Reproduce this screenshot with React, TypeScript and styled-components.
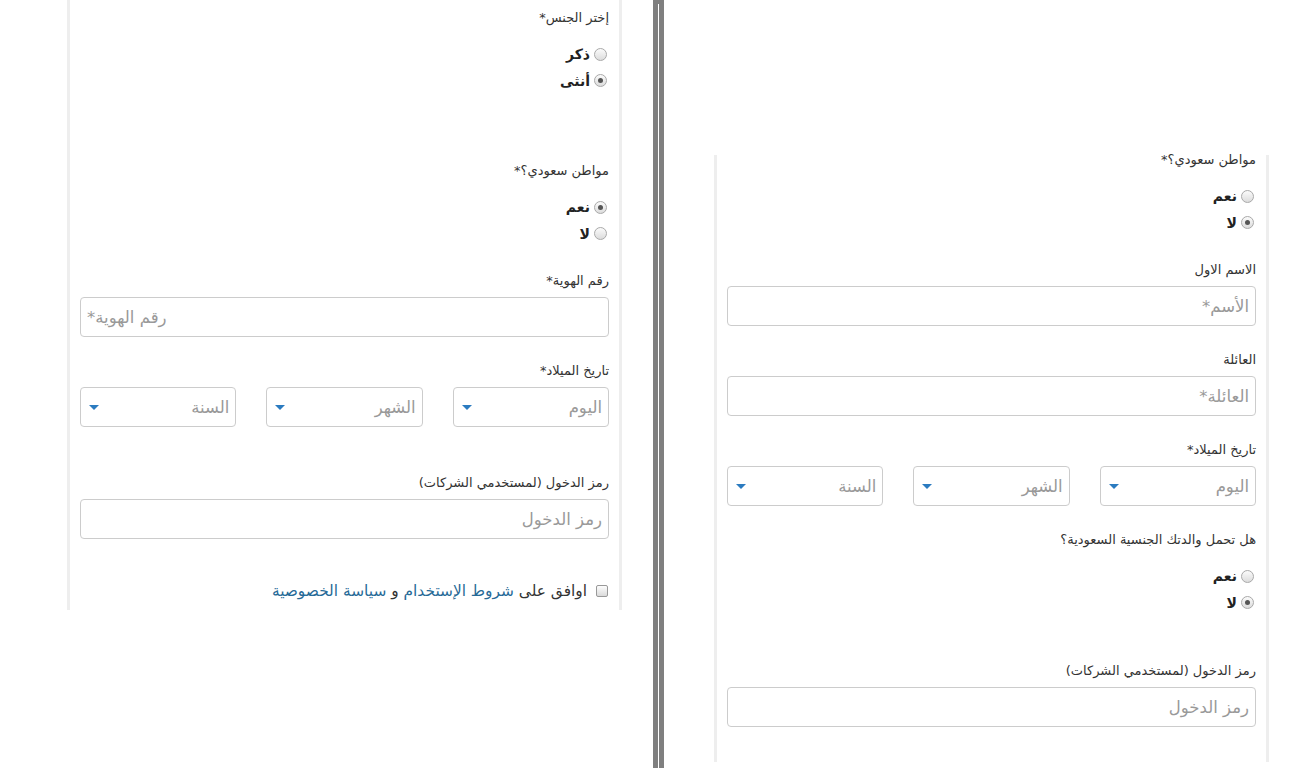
import * as React from 'react'
import styled, { createGlobalStyle } from 'styled-components'

const GlobalStyle = createGlobalStyle`
  html, body {
    margin: 0;
    padding: 0;
    background: #fff;
  }
  body {
    font-family: "DejaVu Sans", sans-serif;
    color: #333;
  }
`

const Page = styled.div`
  display: flex;
  height: 768px;
  overflow: hidden;
`

const LeftSide = styled.div`
  width: 653px;
  flex: none;
  padding-left: 67px;
  box-sizing: border-box;
`

const Divider = styled.div`
  width: 11px;
  flex: none;
  display: flex;
  padding: 4px 0 0 5px;
  box-sizing: border-box;
  background: #7f7f7f;
`

const DividerLine = styled.div`
  width: 1px;
  background: #fff;
`

const RightSide = styled.div`
  flex: 1;
  padding: 155px 0 0 50px;
`

const Panel = styled.div<{ $pt: number; $pb: number }>`
  display: flow-root;
  width: 555px;
  box-sizing: border-box;
  direction: rtl;
  border-left: 3px solid #eee;
  border-right: 3px solid #eee;
  padding: ${p => p.$pt}px 10px ${p => p.$pb}px;
`

const Group = styled.div<{ $mb?: number }>`
  margin-bottom: ${p => (p.$mb ?? 24)}px;
`

const Label = styled.label<{ $mt?: number }>`
  display: block;
  font-size: 13px;
  line-height: 20px;
  color: #333;
  margin-top: ${p => p.$mt ?? 0}px;
  margin-bottom: 6px;
`

const RadioList = styled.div`
  margin-top: 13px;
`

const RadioRow = styled.div`
  display: flex;
  align-items: center;
  gap: 4px;
  height: 26.5px;
  padding-right: 2px;
  font-size: 14px;
  font-weight: bold;
  color: #222;
`

const RadioDot = styled.span<{ $checked?: boolean }>`
  width: 11px;
  height: 11px;
  flex: none;
  border-radius: 50%;
  border: 1px solid #a9a9a9;
  background: linear-gradient(#fbfbfb, #dcdcdc);
  display: flex;
  align-items: center;
  justify-content: center;

  &::after {
    content: '';
    width: 5px;
    height: 5px;
    border-radius: 50%;
    background: #555;
    display: ${p => (p.$checked ? 'block' : 'none')};
  }
`

const Input = styled.div<{ $align?: string }>`
  height: 40px;
  box-sizing: border-box;
  border: 1px solid #ccc;
  border-radius: 4px;
  padding: 0 6px;
  display: flex;
  align-items: center;
  justify-content: ${p => (p.$align === 'left' ? 'flex-end' : 'flex-start')};
  font-size: 16.5px;
  color: #999;
`

const SelectRow = styled.div`
  display: grid;
  grid-template-columns: repeat(3, 1fr);
  gap: 30px;
`

const Select = styled.div`
  height: 40px;
  box-sizing: border-box;
  border: 1px solid #ccc;
  border-radius: 4px;
  padding: 0 6px 0 8px;
  display: flex;
  align-items: center;
  justify-content: space-between;
  font-size: 16.5px;
  color: #999;
`

const Caret = styled.span`
  width: 0;
  height: 0;
  border-left: 5px solid transparent;
  border-right: 5px solid transparent;
  border-top: 5px solid #2b7bc0;
`

const CheckRow = styled.div`
  display: flex;
  align-items: center;
  gap: 9px;
  height: 20px;
  padding-right: 1px;
  font-size: 15.4px;
  color: #333;
`

const CheckBox = styled.span`
  width: 10px;
  height: 10px;
  flex: none;
  border: 1px solid #999;
  border-radius: 2px;
  background: linear-gradient(#fdfdfd, #dadada);
`

const Link = styled.a`
  color: #266a97;
  text-decoration: none;
`

const Radios = ({ options, checked }: { options: string[]; checked: number }) => (
  <RadioList>
    {options.map((o, i) => (
      <RadioRow key={o}>
        <RadioDot $checked={i === checked} />
        <span>{o}</span>
      </RadioRow>
    ))}
  </RadioList>
)

const BirthDate = () => (
  <SelectRow>
    {['اليوم', 'الشهر', 'السنة'].map(t => (
      <Select key={t}>
        <span>{t}</span>
        <Caret />
      </Select>
    ))}
  </SelectRow>
)

const App = () => (
  <>
    <GlobalStyle />
    <Page>
      <LeftSide>
        <Panel $pt={8} $pb={9}>
          <Group $mb={67}>
            <Label>إختر الجنس*</Label>
            <Radios options={['ذكر', 'أنثى']} checked={1} />
          </Group>
          <Group>
            <Label>مواطن سعودي؟*</Label>
            <Radios options={['نعم', 'لا']} checked={0} />
          </Group>
          <Group>
            <Label>رقم الهوية*</Label>
            <Input $align="left">رقم الهوية*</Input>
          </Group>
          <Group $mb={46}>
            <Label>تاريخ الميلاد*</Label>
            <BirthDate />
          </Group>
          <Group $mb={42}>
            <Label>رمز الدخول (لمستخدمي الشركات)</Label>
            <Input>رمز الدخول</Input>
          </Group>
          <CheckRow>
            <CheckBox />
            <span>
              اوافق على <Link href="#">شروط الإستخدام</Link> و <Link href="#">سياسة الخصوصية</Link>
            </span>
          </CheckRow>
        </Panel>
      </LeftSide>
      <Divider>
        <DividerLine />
      </Divider>
      <RightSide>
        <Panel $pt={0} $pb={35}>
          <Group>
            <Label $mt={-5}>مواطن سعودي؟*</Label>
            <Radios options={['نعم', 'لا']} checked={1} />
          </Group>
          <Group>
            <Label>الاسم الاول</Label>
            <Input>الأسم*</Input>
          </Group>
          <Group>
            <Label>العائلة</Label>
            <Input>العائلة*</Input>
          </Group>
          <Group>
            <Label>تاريخ الميلاد*</Label>
            <BirthDate />
          </Group>
          <Group $mb={45}>
            <Label>هل تحمل والدتك الجنسية السعودية؟</Label>
            <Radios options={['نعم', 'لا']} checked={1} />
          </Group>
          <Group $mb={0}>
            <Label>رمز الدخول (لمستخدمي الشركات)</Label>
            <Input>رمز الدخول</Input>
          </Group>
        </Panel>
      </RightSide>
    </Page>
  </>
)

export default App
